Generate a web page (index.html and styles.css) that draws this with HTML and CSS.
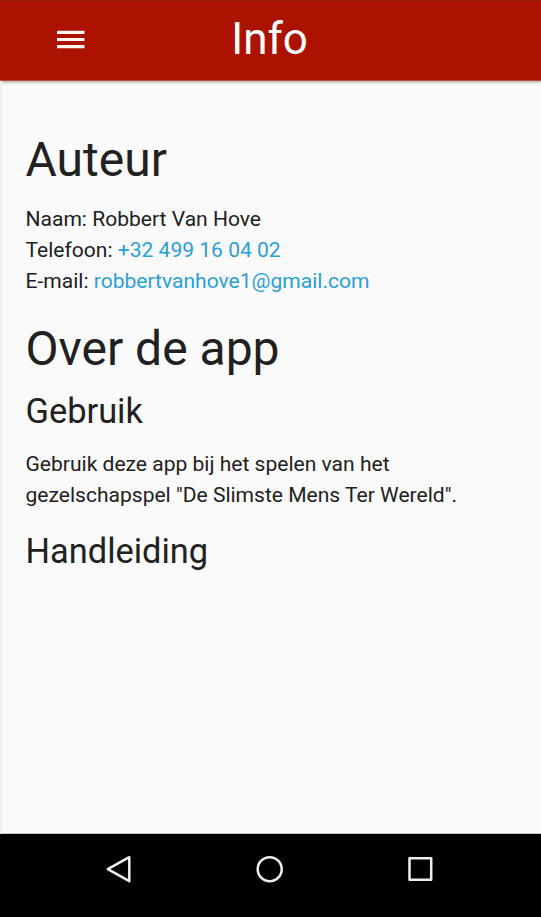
FILE: index.html
```html
<!DOCTYPE html>
<html lang="nl">
<head>
<meta charset="utf-8">
<title>Info</title>
<link rel="stylesheet" href="styles.css">
</head>
<body>
<header class="bar">
  <svg class="menu" viewBox="0 0 28 20"><path d="M0 2.4h27.5M0 9.5h27.5M0 16.7h27.5"/></svg>
  <div class="title">Info</div>
</header>
<main class="content">
  <h1 class="author">Auteur</h1>
  <p class="contact">Naam: Robbert Van Hove<br>Telefoon: <a>+32 499 16 04 02</a><br>E-mail: <a>robbertvanhove1@gmail.com</a></p>
  <h1 class="about">Over de app</h1>
  <h2 class="usage">Gebruik</h2>
  <p class="description">Gebruik deze app bij het spelen van het<br>gezelschapspel "De Slimste Mens Ter Wereld".</p>
  <h2 class="manual">Handleiding</h2>
</main>
<nav class="nav">
  <svg viewBox="0 0 30 30"><path d="M25.3 3.2v24L3.8 15.2Z"/></svg>
  <svg viewBox="0 0 30 30"><circle cx="14.7" cy="15.2" r="12"/></svg>
  <svg viewBox="0 0 30 30"><path d="M3.5 4.3h21.7v21.5H3.5Z"/></svg>
</nav>
</body>
</html>
```
FILE: styles.css
```css
* { box-sizing: border-box; }
body { margin: 0; height: 917px; display: flex; flex-direction: column; overflow: hidden; font-family: Roboto, sans-serif; color: #212121; background: #fafafa; }
.bar { height: 81px; flex: none; display: grid; grid-template-columns: 85px 1fr 85px; background: #ab1300; border-top: 1px solid #951b0d; border-bottom: 1px solid #bf4a3c; box-shadow: 0 1px 3px rgba(0,0,0,.4); }
.menu { width: 28px; height: 20px; margin: 29px 0 0 57px; fill: none; stroke: #fff4ee; stroke-width: 3.2; }
.title { color: #fff; font-size: 44px; line-height: 76px; text-align: center; margin-left: -2px; }
.content { flex: 1; padding: 47px 26px 0 24px; border-left: 2px solid #f0f0f2; border-bottom: 1px solid #c4c4c4; }
h1, h2, p { margin: 0; font-weight: 400; white-space: nowrap; }
h1 { font-size: 48px; line-height: 64px; margin-left: -0.5px; }
h2 { font-size: 34.4px; line-height: 44px; margin-left: -0.5px; }
p { font-size: 21.05px; line-height: 31px; margin-left: -0.5px; }
a { color: #2b9fd9; }
.contact { margin-top: 11px; }
.about { margin-top: 21px; }
.usage { margin-top: 8px; }
.description { margin-top: 15px; }
.manual { margin-top: 19px; }
.nav { height: 83px; flex: none; display: flex; justify-content: center; gap: 121px; padding: 20px 2px 0 0; background: #000; }
.nav svg { width: 30px; height: 30px; fill: none; stroke: #eee; stroke-width: 2.5; stroke-linejoin: round; }
```
